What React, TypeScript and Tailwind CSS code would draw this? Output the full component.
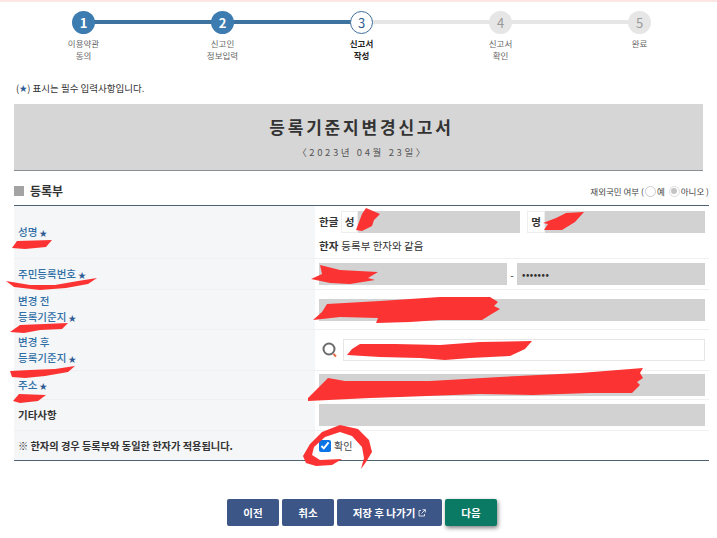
const STEPS = [
  { n: 1, label: ['이용약관', '동의'], state: 'done' },
  { n: 2, label: ['신고인', '정보입력'], state: 'done' },
  { n: 3, label: ['신고서', '작성'], state: 'current' },
  { n: 4, label: ['신고서', '확인'], state: 'todo' },
  { n: 5, label: ['완료'], state: 'todo' },
]

function Star() {
  return <span className="ml-[2px] text-[8px] text-[#2d5a94]">★</span>
}

function Label({ lines, star = true }: { lines: string[]; star?: boolean }) {
  return (
    <div className="pl-[4px] text-[10.5px] leading-[16px] font-medium text-[#2f6fa6]">
      {lines.map((l, i) => (
        <div key={l}>
          {l}
          {star && i === lines.length - 1 && <Star />}
        </div>
      ))}
    </div>
  )
}

function Row({ h, left, children }: { h: string; left: React.ReactNode; children: React.ReactNode }) {
  return (
    <div className={`flex border-b border-[#f0f0f0] ${h}`}>
      <div className="flex w-[301px] items-center bg-[#f5f6f7]">{left}</div>
      <div className="flex flex-1 flex-col justify-center pl-[4px] pr-[4px]">{children}</div>
    </div>
  )
}

function Gray({ className = '' }: { className?: string }) {
  return <div className={`h-[22px] bg-[#d2d2d2] ${className}`} />
}

function Scribbles() {
  return (
    <svg className="pointer-events-none absolute left-0 top-0" width="717" height="538" viewBox="0 0 717 538">
      <g fill="#fb3333">
        <path d="M17 241 L52 240 L46 247 L25 249 L12 248 Z" />
        <path d="M97 278 L78 281 L55 285 L30 285 L6 281 L14 287 L40 290 L66 288 L88 284 Z" />
        <path d="M20 325 L68 323 L62 329 L40 330 L24 333 L10 332 Z" />
        <path d="M10 371 L30 370 L55 369 L75 366 L68 372 L45 376 L25 378 L12 377 Z" />
        <path d="M19 394 L46 395 L38 401 L20 403 L13 401 Z" />
        <path d="M366 208 L380 214 L374 220 L372 226 L362 231 L356 230 L359 222 L362 214 Z" />
        <path d="M566 213 L584 212 L575 222 L562 230 L544 230 L548 224 L543 223 L556 218 Z" />
        <path d="M320 265 L340 270 L378 272 L368 278 L375 280 L350 284 L330 283 L311 279 L322 274 Z" />
        <path d="M327 304 L380 301 L440 297 L490 297 L498 302 L494 306 L500 309 L490 315 L482 320 L440 320 L410 322 L376 323 L378 318 L340 317 L313 320 L322 312 Z" />
        <path d="M360 344 L395 344 L440 345 L480 342 L532 341 L525 349 L510 356 L470 358 L445 360 L420 358 L380 357 L347 355 L352 349 Z" />
        <path d="M328 378 L345 381 L430 381 L500 377 L580 373 L643 368 L640 373 L643 378 L637 382 L640 385 L632 393 L590 393 L533 395 L480 394 L400 397 L370 398 L308 401 L308 398 L318 388 Z" />
        <path d="M303 456 L310 444 L322 432 L340 425 L358 429 L369 440 L372 452 L366 462 L361 469 L364 458 L362 447 L352 436 L340 432 L325 437 L314 447 L312 455 L320 460 L342 459 L332 465 L316 466 L306 463 Z" />
      </g>
    </svg>
  )
}

export default function App() {
  return (
    <div
      className="relative h-[538px] w-[717px] overflow-hidden bg-white text-[#333]"
      style={{ fontFamily: '"Noto Sans CJK KR", "Noto Sans", sans-serif' }}
    >
      <div className="h-[2px] bg-[#fbe6e3]" />

      {/* Steps */}
      <div className="relative ml-[14px] mt-[9px] flex h-[68px] w-[695px]">
        <div className="absolute left-[70px] top-[9px] h-[4px] w-[278px] bg-[#3f739f]" />
        <div className="absolute left-[348px] top-[9px] h-[4px] w-[278px] bg-[#e6e6e6]" />
        {STEPS.map(s => (
          <div key={s.n} className="relative flex w-[139px] flex-col items-center">
            <div
              className={`flex h-[23px] w-[23px] items-center justify-center rounded-full text-[13px] ${
                s.state === 'done'
                  ? 'bg-[#3d7cb0] font-bold text-white'
                  : s.state === 'current'
                    ? 'border border-[#3f6f9f] bg-white text-[#2f5d8f]'
                    : 'bg-[#e6e6e6] text-[#9a9a9a]'
              }`}
            >
              {s.n}
            </div>
            <div
              className={`mt-[3px] text-center text-[8.5px] leading-[12px] ${
                s.state === 'current' ? 'font-bold text-[#222]' : 'text-[#666]'
              }`}
            >
              {s.label.map(l => (
                <div key={l}>{l}</div>
              ))}
            </div>
          </div>
        ))}
      </div>

      <div className="ml-[16px] mt-[1px] flex h-[16px] items-center text-[9.5px] text-[#333]">
        (<span className="text-[8px] text-[#2d5a94]">★</span>) 표시는 필수 입력사항입니다.
      </div>

      {/* Title */}
      <div className="ml-[14px] mt-[8px] flex h-[67px] w-[689px] flex-col items-center border-b border-[#8a8f94] bg-[#d6d6d6]">
        <div className="ml-[6px] mt-[10px] text-[17px] font-bold leading-[26px] tracking-[2.8px] text-[#333]">등록기준지변경신고서</div>
        <div className="ml-[8px] mt-[5px] text-[9.5px] leading-[14px] tracking-[2.6px] text-[#555]">{'〈2023년 04월 23일〉'}</div>
      </div>

      {/* Section head */}
      <div className="ml-[14px] flex h-[35px] w-[695px] items-center justify-between border-b border-[#4f6272] pt-[6px]">
        <div className="flex items-center gap-[6px]">
          <span className="h-[10px] w-[10px] bg-[#a3a3a3]" />
          <span className="text-[12px] font-bold text-[#333]">등록부</span>
        </div>
        <div className="flex items-center text-[8.5px] text-[#444]">
          재외국민 여부 (
          <span className="mx-[1px] h-[11px] w-[11px] rounded-full border border-[#ccc] bg-white" />
          예
          <span className="ml-[4px] mr-[1px] flex h-[11px] w-[11px] items-center justify-center rounded-full border border-[#ddd] bg-white">
            <span className="h-[6px] w-[6px] rounded-full bg-[#c4c4c4]" />
          </span>
          아니오 )
        </div>
      </div>

      {/* Form table */}
      <div className="ml-[14px] w-[695px]">
        <Row h="h-[53px]" left={<div className="pt-[1px]"><Label lines={['성명']} /></div>}>
          <div className="flex h-[22px] items-center text-[10.5px]">
            <span className="w-[22px] font-bold">한글</span>
            <span className="flex h-[22px] w-[17px] items-center justify-center border border-[#eee] font-bold">성</span>
            <Gray className="w-[162px]" />
            <span className="ml-[7px] flex h-[22px] w-[18px] items-center justify-center border border-[#eee] font-bold">명</span>
            <Gray className="w-[160px]" />
          </div>
          <div className="mt-[5px] flex h-[16px] items-center text-[10.5px]">
            <span className="mr-[3px] font-bold">한자</span>등록부 한자와 같음
          </div>
        </Row>
        <Row h="h-[31px]" left={<Label lines={['주민등록번호']} />}>
          <div className="flex items-center">
            <Gray className="w-[188px]" />
            <span className="w-[10px] text-center text-[10px]">-</span>
            <div className="flex h-[22px] w-[188px] items-center bg-[#d2d2d2] pl-[5px] text-[9px] font-bold leading-none tracking-[0.5px]">•••••••</div>
          </div>
        </Row>
        <Row h="h-[40px]" left={<Label lines={['변경 전', '등록기준지']} />}>
          <Gray className="w-[386px]" />
        </Row>
        <Row h="h-[41px]" left={<Label lines={['변경 후', '등록기준지']} />}>
          <div className="flex items-center">
            <svg width="24" height="22" viewBox="0 0 24 22" className="shrink-0">
              <circle cx="10" cy="10" r="5.5" fill="none" stroke="#6b6b6b" strokeWidth="2" />
              <path d="M14.5 15 L17 17.5" stroke="#e4693f" strokeWidth="2" />
            </svg>
            <div className="h-[22px] w-[362px] border border-[#e6e6e6] bg-white" />
          </div>
        </Row>
        <Row h="h-[29px]" left={<Label lines={['주소']} />}>
          <Gray className="w-[386px]" />
        </Row>
        <Row h="h-[31px]" left={<div className="pl-[4px] text-[10.5px] font-bold text-[#333]">기타사항</div>}>
          <Gray className="w-[386px]" />
        </Row>
        <div className="flex h-[30px] border-b border-[#4f6272]">
          <div className="flex w-[301px] items-center bg-[#f5f6f7] pl-[4px] text-[10.2px] font-bold text-[#333]">
            ※ 한자의 경우 등록부와 동일한 한자가 적용됩니다.
          </div>
          <label className="flex flex-1 items-center pl-[4px] text-[10px] text-[#444]">
            <input type="checkbox" defaultChecked className="mr-[3px] h-[12px] w-[12px] accent-[#0b74e5]" />
            확인
          </label>
        </div>
      </div>

      {/* Buttons */}
      <div className="ml-[227px] mt-[38px] flex gap-[3px] text-[10.5px] font-bold text-white">
        <button className="h-[27px] w-[52px] rounded-[2px] bg-[#3c5688]">이전</button>
        <button className="h-[27px] w-[52px] rounded-[2px] bg-[#3c5688]">취소</button>
        <button className="flex h-[27px] w-[105px] items-center justify-center gap-[3px] rounded-[2px] bg-[#3c5688]">
          저장 후 나가기
          <svg width="8" height="8" viewBox="0 0 8 8" fill="none" stroke="white" strokeWidth="0.8">
            <path d="M3 1.5 H1 V7 H6.5 V5" />
            <path d="M4.5 0.7 H7.3 V3.5 M7.3 0.7 L3.5 4.5" />
          </svg>
        </button>
        <button className="h-[27px] w-[52px] rounded-[2px] bg-[#0b7a64] shadow-[1px_2px_4px_rgba(0,0,0,0.5)]">다음</button>
      </div>

      <Scribbles />
    </div>
  )
}
